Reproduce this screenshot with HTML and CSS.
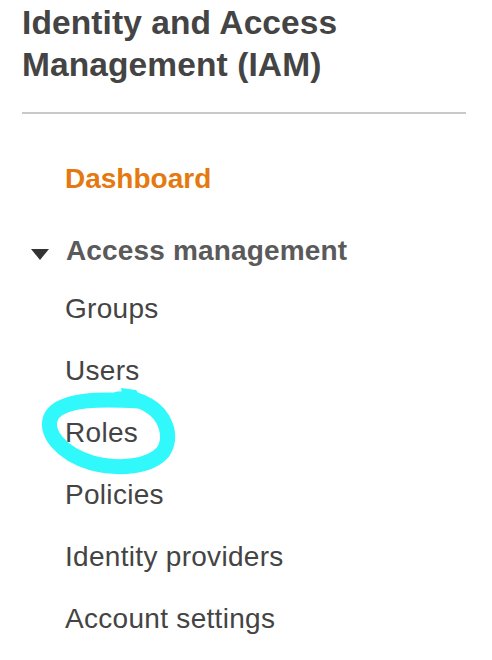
FILE: index.html
```html
<!DOCTYPE html>
<html lang="en">
<head>
<meta charset="utf-8">
<title>IAM</title>
<link rel="stylesheet" href="styles.css">
</head>
<body>
<div class="page">
  <h1 class="title">Identity and Access Management (IAM)</h1>
  <hr class="divider">
  <nav class="nav">
    <a class="dash" href="#">Dashboard</a>
    <div class="section">
      <svg class="caret" width="18" height="11" viewBox="0 0 18 11"><path d="M0 0H18L9 11Z" fill="#333"/></svg>
      <span>Access management</span>
    </div>
    <ul class="items">
      <li><a href="#">Groups</a></li>
      <li><a href="#">Users</a></li>
      <li><a href="#">Roles</a></li>
      <li><a href="#">Policies</a></li>
      <li><a href="#">Identity providers</a></li>
      <li><a href="#">Account settings</a></li>
    </ul>
  </nav>
  <svg class="scribble" width="492" height="660" viewBox="0 0 492 660">
    <path d="M138 401 C105 399 64 398 52 415 C42 432 62 454 92 463 C120 470 150 467 163 452 C173 437 166 415 148 405 C140 400 130 398 118 399" fill="none" stroke="#30f8fb" stroke-width="15" stroke-linecap="round" stroke-linejoin="round"/>
    <path d="M121 388 L136 390 L146 403 L124 406 Z" fill="#30f8fb"/>
  </svg>
</div>
</body>
</html>
```
FILE: styles.css
```css
html, body {
  margin: 0;
  padding: 0;
  background: #fff;
}
.page {
  position: relative;
  width: 492px;
  height: 660px;
  overflow: hidden;
  font-family: "Liberation Sans", Arial, Helvetica, sans-serif;
}
.title {
  margin: 0;
  padding: 2px 0 0 22px;
  font-size: 33.5px;
  line-height: 42px;
  font-weight: bold;
  color: #444;
  letter-spacing: 0.1px;
}
.divider {
  margin: 26px 26px 0 22px;
  border: 0;
  height: 2px;
  background: #c9c9c9;
}
.nav {
  display: flex;
  flex-direction: column;
  margin-top: 34px;
  font-size: 28px;
}
.dash {
  padding-left: 65px;
  line-height: 62px;
  font-weight: bold;
  color: #e47911;
  text-decoration: none;
  margin-bottom: 14px;
}
.section {
  display: flex;
  align-items: center;
  gap: 17px;
  padding-left: 31px;
  line-height: 54px;
  font-weight: bold;
  color: #5a5a5a;
  letter-spacing: 0.15px;
}
.caret {
  margin-top: 6px;
  flex: none;
}
.items {
  list-style: none;
  margin: 0;
  padding: 0 0 0 65px;
}
.items li {
  line-height: 62px;
  letter-spacing: 0.3px;
}
.items a {
  color: #444;
  text-decoration: none;
}
.scribble {
  position: absolute;
  top: 0;
  left: 0;
  pointer-events: none;
}
```
